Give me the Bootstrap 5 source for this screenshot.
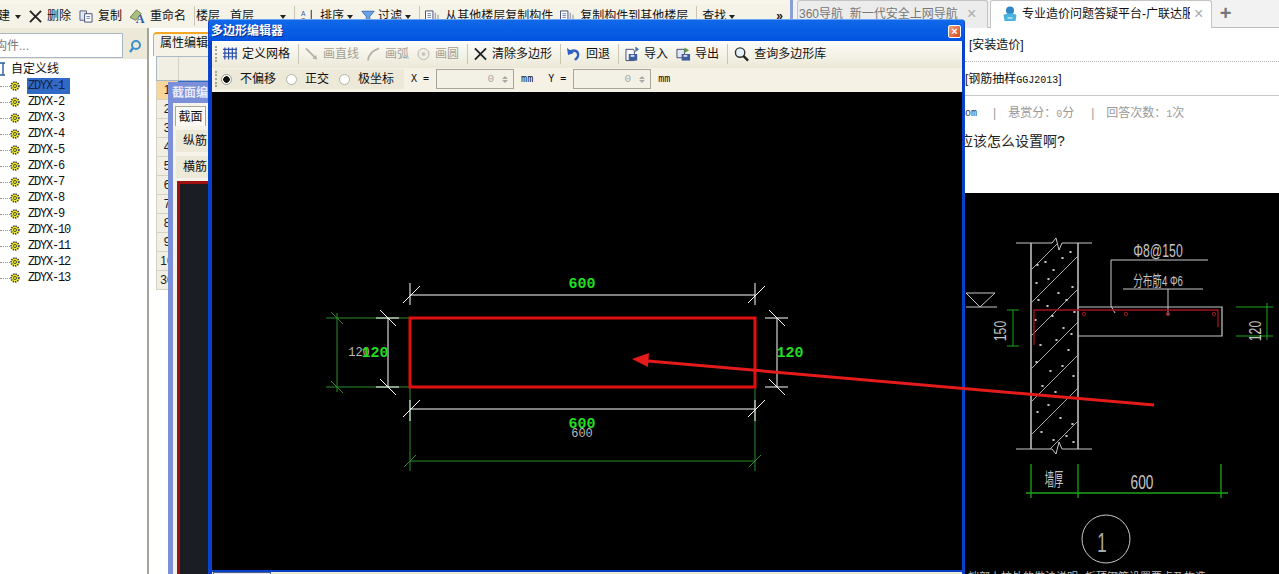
<!DOCTYPE html>
<html lang="zh-CN">
<head>
<meta charset="UTF-8">
<title>多边形编辑器</title>
<link href="https://cdn.jsdelivr.net/npm/bootstrap@5.3.0/dist/css/bootstrap.min.css" rel="stylesheet">
<style>
  html, body { height: 100%; overflow: hidden; }
  body { background: #fff; color: #111; font: 12px/16px "Liberation Sans", "Noto Sans CJK SC", sans-serif; }
  .desk { width: 1279px; height: 574px; position: relative; overflow: hidden; }
  .app { width: 790px; flex: none; background: #ece9d8; }
  .app-strip { height: 4px; background: #f7f5ec; }
  .app-tools { height: 24px; margin-left: -2px; background: #f5f3e8; font-size: 12px; white-space: nowrap; overflow: hidden; }
  .tool { display: flex; align-items: center; gap: 5px; flex: none; }
  .tool-tight { gap: 4px; }
  .ico-pull { margin-right: -2px; }
  .caret-mini { width: 0; height: 0; border: 3px solid transparent; border-top: 4px solid #222; margin-top: 4px; flex: none; }
  .tool > .caret-mini { margin-left: -2px; }
  .tool > .caret-wide { margin-left: 0; }
  .tb-sep { width: 1px; height: 20px; background: #c9c6b4; flex: none; margin-right: -2px; }
  .sep-a { margin-right: -7px; }
  .sep-b { margin-right: -3px; }
  .sep-c { margin-right: -4px; }
  .ms-floor { margin-left: 2px; }
  .ms-caret { margin-left: 18px; }
  .ms-pull { margin-left: -2px; }
  .ms-more { margin-left: 33px; }
  .side { width: 149px; flex: none; border-right: 2px solid #a3a39b; background: #fff; height: 546px; }
  .search-row { height: 31px; background: #ece9d8; padding-top: 5px; }
  .search-box { width: 123px; height: 25px; background: #fff; border: 1px solid #a9b7c6; border-left: 0; color: #777; line-height: 24px; overflow: hidden; white-space: nowrap; text-indent: -5px; }
  .search-btn { width: 24px; height: 25px; }
  .tree-row { height: 16px; white-space: nowrap; position: relative; }
  .tree-dots { width: 10px; border-top: 1px dotted #999; flex: none; }
  .tree-name { font: 12px/16px "Liberation Mono", monospace; letter-spacing: -1.2px; margin-left: 7px; padding: 0 1px; width: 43px; }
  .tree-on { background: #316ac5; color: #12244a; }
  .tree-root { height: 19px; }
  .root-name { margin-left: 5px; }
  .props { width: 641px; flex: none; position: relative; background: #fff; padding-left: 7px; }
  .props-tab { height: 24px; width: 64px; margin-left: -3px; background: #f5f3e8; border: 1px solid #b5b3a3; border-top: 2px solid #f5a623; border-bottom: 0; border-radius: 4px 0 0 0; padding: 1px 0 0 6px; white-space: nowrap; }
  .prop-head { height: 25px; width: 60px; border: 1px solid #a9b7c6; background: #f1efe3; }
  .prop-corner { width: 22px; height: 100%; border-right: 1px solid #d5d2c2; }
  .prop-num { width: 22px; height: 19px; background: #f1efe3; border: 1px solid #d5d2c2; border-top: 0; text-align: center; line-height: 18px; color: #222; flex: none; }
  .prop-sel { background: #fad69a; }
  .prop-cell { width: 40px; height: 19px; background: #316ac5; }
  .sect-win { left: 168px; top: 82px; width: 60px; height: 492px; background: #f6f4ea; border-left: 5px solid #7b90d8; }
  .sect-title { height: 21px; margin-left: -5px; background: #7b90d8; color: #e8ecfa; font-weight: 700; padding: 3px 0 0 4px; white-space: nowrap; overflow: hidden; }
  .sect-tab { width: 31px; height: 20px; margin: 3px 0 0 2px; background: #fbfaf4; border: 1px solid #aaa89a; border-bottom: 0; text-align: center; line-height: 20px; font-size: 12px; white-space: nowrap; }
  .sect-row { height: 22px; margin: 4px 0 0 3px; background: #ece9d8; padding: 3px 0 0 7px; white-space: nowrap; }
  .sect-red { height: 400px; margin: 3px 0 0 4px; background: #1a1d24; border: 3px solid #a01010; border-right: 0; }
  .poly-win { left: 208px; top: 19px; width: 757px; height: 562px; background: #0a3fc8; border-radius: 4px 4px 0 0; border: 1px solid #0b45d0; border-top-color: #6fa5f5; }
  .poly-title { height: 21px; background: linear-gradient(#1168e8, #0053e0); color: #fff; font-weight: 700; font-size: 12px; padding: 3px 0 0 2px; text-shadow: 1px 1px 0 #0a2f90; }
  .poly-close { width: 13px; height: 13px; background: linear-gradient(135deg, #f0a080, #d8481c); border: 1px solid #fff; border-radius: 2px; color: #fff; font: 700 11px/11px "Liberation Sans", sans-serif; text-align: center; text-shadow: none; margin: 2px 3px 0 0; }
  .poly-body { margin: 0 2px 0 3px; }
  .poly-tools { height: 27px; background: linear-gradient(#fdfdf9, #ece8d8); padding-left: 3px; padding-bottom: 2px; white-space: nowrap; font-size: 12px; }
  .poly-opts { height: 24px; background: #f5f2e5; padding-left: 3px; white-space: nowrap; gap: 7px; padding-bottom: 2px; }
  .grip { width: 2px; height: 16px; border-left: 2px dotted #a6a38f; flex: none; margin-right: -2px; }
  .tool-off { color: #a3a193; }
  .opt-shade { background: #ece9d9; height: 20px; gap: 10px; padding-right: 10px; }
  .opt-shade .grip { margin-right: -6px; }
  .opt-shade .tool { gap: 8px; }
  .radio-dot { width: 11px; height: 11px; border: 1px solid #b4b2a4; border-radius: 50%; background: #fff; flex: none; }
  .radio-on { background: radial-gradient(#111 0 3px, #fff 3.5px); border-color: #9b9a8e; }
  .mono-lab { font: 10px/16px "DejaVu Sans Mono", monospace; color: #111; flex: none; }
  .spin-box { width: 78px; height: 20px; background: #f3f1e6; border: 1px solid #a8a69a; color: #aaa; text-align: right; padding-right: 19px; font: 11px/18px "Liberation Mono", monospace; position: relative; flex: none; }
  .spin-box::before { content: ""; position: absolute; right: 5px; top: 3px; border: 3px solid transparent; border-bottom: 3px solid #aaa; }
  .spin-box::after { content: ""; position: absolute; right: 5px; bottom: 2px; border: 3px solid transparent; border-top: 3px solid #aaa; }
  .poly-canvas { display: block; background: #000; width: 750px; height: 478px; }
  .poly-foot { height: 5px; background: #ece9d8; padding-left: 1px; }
  .foot-tab { width: 58px; height: 3px; margin-top: 2px; background: #e5e9f5; border: 1px solid #47638c; border-bottom: 0; }
  .browser { width: 489px; flex: none; height: 574px; border-left: 3px solid #8ca0d8; }
  .tab-strip { height: 28px; background: #f2f2f2; border-bottom: 1px solid #bdbdbd; padding-left: 4px; font-size: 12px; }
  .b-tab { height: 28px; border: 1px solid #c4c4c4; border-bottom: 0; border-radius: 3px 3px 0 0; white-space: nowrap; overflow: hidden; flex: none; }
  .b-tab-off { width: 191px; background: #ececec; color: #777; padding: 5px 0 0 1px; }
  .b-tab-on { width: 222px; background: #fff; margin-left: 2px; padding: 5px 0 0 11px; }
  .tab-name { width: 168px; overflow: hidden; flex: none; }
  .tab-name-off { width: 160px; }
  .tab-x { color: #aaa; font-size: 16px; line-height: 16px; flex: none; }
  .tab-plus { color: #777; font-size: 20px; font-weight: 700; line-height: 26px; width: 27px; text-align: center; }
  .page-area { padding-left: 172px; white-space: nowrap; overflow: hidden; font-size: 12px; }
  .pg-row { height: 34px; line-height: 34px; }
  .pg-dot { border-bottom: 1px dotted #b5b5b5; }
  .pg-line { border-bottom: 1px solid #c9c9c9; }
  .pg-mono { font: 10px "Liberation Mono", monospace; }
  .pg-meta { height: 36px; line-height: 35px; color: #999; }
  .pg-blue { color: #235; font: 10px/35px "Liberation Mono", monospace; margin-right: 16px; }
  .pg-bar { margin-right: 12px; }
  .pg-bar-wide { margin-right: 17px; }
  .pg-q { height: 61px; font-size: 14px; line-height: 18px; color: #222; text-indent: -6px; }
  .pic { display: block; background: #000; width: 486px; height: 381px; }
  .arrow-top { left: 0; top: 0; width: 1279px; height: 574px; pointer-events: none; }
</style>
</head>
<body>
<svg width="0" height="0" class="d-block position-absolute">
  <defs>
    <symbol id="ico-x" viewBox="0 0 14 14"><path d="M1 1l12 12M13 1L1 13" stroke="#222" stroke-width="2" fill="none"/></symbol>
    <symbol id="ico-doc" viewBox="0 0 15 14"><path d="M1 1h7v10H1z" fill="#dfe8f5" stroke="#557"/><path d="M6 4h8v9H6z" fill="#fff" stroke="#447"/><path d="M8 7h4M8 9h4" stroke="#68a"/></symbol>
    <symbol id="ico-ren" viewBox="0 0 16 16"><path d="M0 9l7-8 5 4-6 7z" fill="#a9c07c" stroke="#675"/><text x="6" y="15" font-size="13" font-weight="700" font-family="Liberation Serif" fill="#2b56a8">A</text></symbol>
    <symbol id="ico-sort" viewBox="0 0 16 16"><text x="1" y="7" font-size="7" fill="#2b56a8" font-family="Liberation Sans">A</text><text x="1" y="15" font-size="7" fill="#a33" font-family="Liberation Sans">Z</text><path d="M12 1v14" stroke="#222"/></symbol>
    <symbol id="ico-filter" viewBox="0 0 16 14"><path d="M1 1h14l-5 6v6l-4-2V7z" fill="#6aa2e8" stroke="#3566b0"/></symbol>
    <symbol id="ico-page" viewBox="0 0 16 14"><path d="M1 1h8v12H1z" fill="#fff" stroke="#447"/><path d="M3 4h4M3 6h4M3 8h4" stroke="#68a"/><path d="M11 3h1v9h-1zM14 5h1v5h-1z" fill="#789"/></symbol>
    <symbol id="ico-grid" viewBox="0 0 15 15"><path d="M2 1v13M6 1v13M10 1v13M14 1v13M0 3h15M0 7h15M0 11h15" stroke="#2a4fa8" stroke-width="1.3" fill="none"/></symbol>
    <symbol id="ico-line" viewBox="0 0 14 14"><path d="M1 1l11 11" stroke="#b5b3a6" stroke-width="2"/><path d="M13 13l-1-5-4 4z" fill="#b5b3a6"/></symbol>
    <symbol id="ico-arc" viewBox="0 0 14 14"><path d="M1 14C2 7 6 3 13 1" stroke="#b5b3a6" stroke-width="2" fill="none"/></symbol>
    <symbol id="ico-circ" viewBox="0 0 14 14"><circle cx="7" cy="7" r="6" fill="#efeee6" stroke="#b5b3a6"/><circle cx="7" cy="7" r="2" fill="#c5c3b8"/></symbol>
    <symbol id="ico-undo" viewBox="0 0 14 14"><path d="M2 6c3-4 10-3 9 3-.5 2-2 3-3 4" stroke="#2d5fc0" stroke-width="2.4" fill="none"/><path d="M0 1l1 7 6-2z" fill="#2d5fc0"/></symbol>
    <symbol id="ico-in" viewBox="0 0 16 16"><path d="M1 3h8l1 2v10H1z" fill="#f5f7fb" stroke="#446"/><path d="M4 8h9v7H4z" fill="#3a5f9c"/><path d="M6 9h4v2H6z" fill="#dde"/><path d="M11 0l4 3-4 3z" fill="#47a"/></symbol>
    <symbol id="ico-out" viewBox="0 0 16 16"><path d="M1 3h8v9H1z" fill="#dfe8f5" stroke="#446"/><path d="M6 8h9v7H6z" fill="#3a5f9c"/><path d="M8 9h4v2H8z" fill="#dde"/><path d="M9 1l5 3-5 3z" fill="#5a9d4a"/></symbol>
    <symbol id="ico-find" viewBox="0 0 16 16"><circle cx="6.500" cy="6.500" r="5" fill="#e6f0fa" stroke="#333" stroke-width="1.500"/><path d="M10 10l5 5" stroke="#222" stroke-width="2.500"/></symbol>
    <symbol id="ico-gear" viewBox="0 0 10 10"><circle cx="5" cy="5" r="3.900" fill="#f5ee20" stroke="#333" stroke-width="1.600" stroke-dasharray="1.300 1"/><circle cx="5" cy="5" r="1.600" fill="#e8d820" stroke="#554"/></symbol>
  </defs>
</svg>

<div class="desk d-flex">
  <div class="app">
    <div class="app-strip"></div>
    <div class="app-tools d-flex align-items-center gap-2">
      <span class="tool">建<i class="caret-mini caret-wide"></i></span>
      <span class="tool"><svg width="13" height="13"><use href="#ico-x"/></svg>删除</span>
      <span class="tool"><svg width="14" height="13"><use href="#ico-doc"/></svg>复制</span>
      <span class="tool"><svg width="15" height="15"><use href="#ico-ren"/></svg>重命名</span>
      <i class="tb-sep sep-a"></i>
      <span>楼层</span><span class="ms-floor">首层</span><i class="caret-mini ms-caret"></i>
      <i class="tb-sep sep-b"></i>
      <span class="tool"><svg width="15" height="15"><use href="#ico-sort"/></svg>排序<i class="caret-mini"></i></span>
      <span class="tool"><svg class="ico-pull" width="14" height="13"><use href="#ico-filter"/></svg>过滤<i class="caret-mini"></i></span>
      <i class="tb-sep sep-c"></i>
      <span class="tool"><svg width="16" height="13"><use href="#ico-page"/></svg>从其他楼层复制构件</span>
      <span class="tool ms-pull"><svg width="16" height="13"><use href="#ico-page"/></svg>复制构件到其他楼层</span>
      <i class="tb-sep sep-b"></i>
      <span class="tool">查找<i class="caret-mini"></i></span>
      <span class="ms-more fw-bold">»</span>
    </div>
    <div class="d-flex">
      <div class="side">
        <div class="search-row d-flex">
          <div class="search-box">构件...</div>
          <div class="search-btn d-flex align-items-center justify-content-center">
            <svg width="14" height="14" viewBox="0 0 14 14"><circle cx="8" cy="6" r="4" fill="none" stroke="#3d8fd0" stroke-width="2"/><path d="M5 9l-3 4" stroke="#3d8fd0" stroke-width="2.400"/></svg>
          </div>
        </div>
        <div class="tree-row tree-root d-flex align-items-center">
          <svg width="6" height="14" viewBox="0 0 6 14"><path d="M3 1v12M0 1h5M0 13h5" stroke="#2a6090" stroke-width="1.400" fill="none"/></svg>
          <span class="root-name">自定义线</span>
        </div>
        <div class="tree-row d-flex align-items-center"><i class="tree-dots"></i><svg width="10" height="10"><use href="#ico-gear"/></svg><span class="tree-name tree-on">ZDYX-1</span></div>
        <div class="tree-row d-flex align-items-center"><i class="tree-dots"></i><svg width="10" height="10"><use href="#ico-gear"/></svg><span class="tree-name">ZDYX-2</span></div>
        <div class="tree-row d-flex align-items-center"><i class="tree-dots"></i><svg width="10" height="10"><use href="#ico-gear"/></svg><span class="tree-name">ZDYX-3</span></div>
        <div class="tree-row d-flex align-items-center"><i class="tree-dots"></i><svg width="10" height="10"><use href="#ico-gear"/></svg><span class="tree-name">ZDYX-4</span></div>
        <div class="tree-row d-flex align-items-center"><i class="tree-dots"></i><svg width="10" height="10"><use href="#ico-gear"/></svg><span class="tree-name">ZDYX-5</span></div>
        <div class="tree-row d-flex align-items-center"><i class="tree-dots"></i><svg width="10" height="10"><use href="#ico-gear"/></svg><span class="tree-name">ZDYX-6</span></div>
        <div class="tree-row d-flex align-items-center"><i class="tree-dots"></i><svg width="10" height="10"><use href="#ico-gear"/></svg><span class="tree-name">ZDYX-7</span></div>
        <div class="tree-row d-flex align-items-center"><i class="tree-dots"></i><svg width="10" height="10"><use href="#ico-gear"/></svg><span class="tree-name">ZDYX-8</span></div>
        <div class="tree-row d-flex align-items-center"><i class="tree-dots"></i><svg width="10" height="10"><use href="#ico-gear"/></svg><span class="tree-name">ZDYX-9</span></div>
        <div class="tree-row d-flex align-items-center"><i class="tree-dots"></i><svg width="10" height="10"><use href="#ico-gear"/></svg><span class="tree-name">ZDYX-10</span></div>
        <div class="tree-row d-flex align-items-center"><i class="tree-dots"></i><svg width="10" height="10"><use href="#ico-gear"/></svg><span class="tree-name">ZDYX-11</span></div>
        <div class="tree-row d-flex align-items-center"><i class="tree-dots"></i><svg width="10" height="10"><use href="#ico-gear"/></svg><span class="tree-name">ZDYX-12</span></div>
        <div class="tree-row d-flex align-items-center"><i class="tree-dots"></i><svg width="10" height="10"><use href="#ico-gear"/></svg><span class="tree-name">ZDYX-13</span></div>
      </div>
      <div class="props">
        <div class="props-tab mt-1">属性编辑</div>
        <div class="prop-head"><div class="prop-corner"></div></div>
        <div class="d-flex"><div class="prop-num prop-sel">1</div><div class="prop-cell"></div></div>
        <div class="prop-num">2</div>
        <div class="prop-num">3</div>
        <div class="prop-num">4</div>
        <div class="prop-num">5</div>
        <div class="prop-num">6</div>
        <div class="prop-num">7</div>
        <div class="prop-num">8</div>
        <div class="prop-num">9</div>
        <div class="prop-num">10</div>
        <div class="prop-num">30</div>
      </div>
    </div>
  </div>

  <div class="browser">
    <div class="tab-strip d-flex">
      <div class="b-tab b-tab-off d-flex gap-2"><span class="tab-name tab-name-off">360导航_新一代安全上网导航</span><span class="tab-x">×</span></div>
      <div class="b-tab b-tab-on d-flex gap-1">
        <svg width="16" height="16" viewBox="0 0 15 16"><circle cx="7.500" cy="4.500" r="4" fill="#2f86c9"/><path d="M1 9c3-2 10-2 13 0l-1 6H2z" fill="#49b3dd"/><path d="M5 12h5" stroke="#fff"/></svg>
        <span class="tab-name">专业造价问题答疑平台-广联达服务</span><span class="tab-x">×</span>
      </div>
      <div class="tab-plus">+</div>
    </div>
    <div class="page-area">
      <div class="pg-row pg-dot ps-1">[安装造价]</div>
      <div class="pg-row pg-line">[钢筋抽样<span class="pg-mono">GGJ2013</span>]</div>
      <div class="pg-meta d-flex">
        <span class="pg-blue">om</span><span class="pg-bar">|</span><span class="pg-bar-wide">悬赏分：<span class="pg-mono">0</span>分</span><span class="pg-bar">|</span><span>回答次数：<span class="pg-mono">1</span>次</span>
      </div>
      <div class="pg-q">应该怎么设置啊?</div>
    </div>
    <svg class="pic" viewBox="793 193 486 381">
      <defs><clipPath id="wall-clip"><rect x="1031" y="243" width="47" height="206"/></clipPath></defs>
      <g fill="none" stroke="#c8c8c8" stroke-width="1">
        <path d="M1016 243h36l4-5 3 12 3-7h30M1016 449h36l4 5 3-12 3 7h30" />
        <path d="M1031 243v206M1078 243v206" stroke-width="1.500"/>
        <g clip-path="url(#wall-clip)" stroke="#aaa">
          <path d="M1031 270l47-47M1031 303l47-47M1031 336l47-47M1031 369l47-47M1031 402l47-47M1031 435l47-47M1031 468l47-47M1031 501l47-47M1031 534l47-47"/>
        </g>
        <path d="M1078 307h144v29h-144" stroke-width="1.200"/>
        <path d="M966 293h29l-15 14zM966 307h31"/>
        <path d="M1111 260h97M1111 260v46l4 7M1123 289h80M1168 289v26"/>
        <circle cx="1106" cy="539" r="24"/>
      </g>
      <path d="M1037 265h1M1045 262h1M1053 270h1M1062 258h1M1070 252h1M1036 283h1M1048 279h1M1058 293h1M1072 287h1M1038 300h1M1047 306h1M1066 300h1M1074 312h1M1035 320h1M1052 316h1M1063 328h1M1071 334h1M1040 345h1M1056 340h1M1068 350h1M1036 362h1M1050 371h1M1062 366h1M1073 376h1M1042 386h1M1055 392h1M1069 398h1M1037 412h1M1048 405h1M1060 418h1M1072 424h1M1041 432h1M1053 440h1M1066 436h1M1073 442h1" stroke="#fff" stroke-width="1.600" stroke-linecap="round"/>
      <g fill="none" stroke="#a51220">
        <path d="M1034 345v-35h184v17" stroke-width="1.300"/>
        <circle cx="1084" cy="314" r="1.800"/><circle cx="1126" cy="314" r="1.800"/><circle cx="1168" cy="314" r="1.800"/><circle cx="1214" cy="314" r="1.800"/>
      </g>
      <g fill="none" stroke="#1aa51a">
        <path d="M1013 310v36M1007 310h12M1007 346h12M1236 307h37M1236 336h37M1267 303v37"/>
        <path d="M1031 464v34M1078 464v34M1221 464v34M1026 493h202" stroke-width="1.300"/>
      </g>
      <g fill="#c4c4c4" font-family="Liberation Sans, Noto Sans CJK SC, sans-serif">
        <text transform="translate(1158 257) scale(.72 1.100)" font-size="17" text-anchor="middle">Φ8@150</text>
        <text transform="translate(1158 286) scale(.8 1.250)" font-size="12" text-anchor="middle">分布筋4 Φ6</text>
        <text transform="translate(1142 489) scale(.72 1.100)" font-size="19" text-anchor="middle">600</text>
        <text transform="translate(1054 486) scale(.58 1.150)" font-size="16" text-anchor="middle">墙厚</text>
        <text transform="translate(1006 331) rotate(-90) scale(.72 1)" font-size="17" text-anchor="middle">150</text>
        <text transform="translate(1261 331) rotate(-90) scale(.72 1)" font-size="17" text-anchor="middle">120</text>
        <text transform="translate(1102 552) scale(.6 1)" font-size="28" fill="#aaa" text-anchor="middle">1</text>
        <text x="968" y="581" font-size="11" fill="#bbb">端部上柱处的做法说明</text>
        <text x="1085" y="581" font-size="11" fill="#bbb">板顶钢筋设置要点及构造</text>
      </g>
    </svg>
  </div>

  <!-- windows on top -->
  <div class="sect-win position-absolute">
    <div class="sect-title">截面编辑</div>
    <div class="sect-tab">截面</div>
    <div class="sect-row">纵筋</div>
    <div class="sect-row">横筋</div>
    <div class="sect-red"></div>
  </div>

  <div class="poly-win position-absolute">
    <div class="poly-title d-flex justify-content-between">
      <span>多边形编辑器</span><span class="poly-close">×</span>
    </div>
    <div class="poly-body">
      <div class="poly-tools d-flex align-items-center gap-2">
        <i class="grip"></i>
        <span class="tool"><svg width="14" height="15"><use href="#ico-grid"/></svg>定义网格</span><i class="tb-sep"></i>
        <span class="tool tool-off"><svg width="13" height="14"><use href="#ico-line"/></svg>画直线</span>
        <span class="tool tool-off"><svg width="13" height="14"><use href="#ico-arc"/></svg>画弧</span>
        <span class="tool tool-off"><svg width="13" height="14"><use href="#ico-circ"/></svg>画圆</span><i class="tb-sep"></i>
        <span class="tool"><svg width="13" height="14"><use href="#ico-x"/></svg>清除多边形</span><i class="tb-sep"></i>
        <span class="tool"><svg width="14" height="14"><use href="#ico-undo"/></svg>回退</span><i class="tb-sep"></i>
        <span class="tool tool-tight"><svg width="15" height="16"><use href="#ico-in"/></svg>导入</span>
        <span class="tool tool-tight"><svg width="15" height="16"><use href="#ico-out"/></svg>导出</span><i class="tb-sep"></i>
        <span class="tool"><svg width="15" height="16"><use href="#ico-find"/></svg>查询多边形库</span>
      </div>
      <div class="poly-opts d-flex align-items-center">
        <div class="opt-shade d-flex align-items-center">
          <i class="grip"></i>
          <span class="tool"><i class="radio-dot radio-on"></i><span>不偏移</span></span>
          <span class="tool"><i class="radio-dot"></i><span>正交</span></span>
          <span class="tool"><i class="radio-dot"></i><span>极坐标</span></span>
        </div>
        <span class="mono-lab">X =</span>
        <div class="spin-box">0</div>
        <span class="mono-lab">mm</span>
        <span class="mono-lab ms-2">Y =</span>
        <div class="spin-box">0</div>
        <span class="mono-lab">mm</span>
      </div>
      <svg class="poly-canvas" viewBox="212 92 750 478">
        <g fill="none" stroke="#2c8a2c" stroke-width="1">
          <path d="M326 318h84M326 387h84M337 313v79M331 312l12 12M331 381l12 12"/>
          <path d="M410 387v84M755 387v84M410 461h345M404 467l12-12M749 467l12-12"/>
        </g>
        <g fill="none" stroke="#fff" stroke-width="1">
          <path d="M410 283v22M755 283v22M410 295h345M403 303l17-17M748 303l17-17"/>
          <path d="M410 400v21M755 400v21M410 409h345M403 417l17-17M748 417l17-17"/>
          <path d="M376 318h23M376 387h23M388 318v69M380 310l16 16M380 379l16 16"/>
          <path d="M765 318h23M765 387h23M777 318v69M769 310l16 16M769 379l16 16"/>
        </g>
        <rect x="410" y="318" width="345" height="69" fill="none" stroke="#e01010" stroke-width="3"/>
        <g font-family="Liberation Mono, monospace" text-anchor="middle">
          <text x="359" y="356" font-size="12" fill="#bbb">120</text>
          <text x="582" y="437" font-size="12" fill="#bbb">600</text>
          <g fill="#22dd22" font-size="15" font-weight="700">
            <text x="582" y="288">600</text>
            <text x="582" y="428">600</text>
            <text x="375" y="357">120</text>
            <text x="790" y="357">120</text>
          </g>
        </g>
      </svg>
      <div class="poly-foot"><div class="foot-tab"></div></div>
    </div>
  </div>

  <svg class="arrow-top position-absolute" viewBox="0 0 1279 574">
    <path d="M1154 405L648 361" stroke="#e51b1b" stroke-width="3" fill="none"/>
    <path d="M632 359l17-6-1 14z" fill="#e51b1b"/>
  </svg>
</div>

<script src="https://cdn.jsdelivr.net/npm/bootstrap@5.3.0/dist/js/bootstrap.bundle.min.js"></script>
</body>
</html>
